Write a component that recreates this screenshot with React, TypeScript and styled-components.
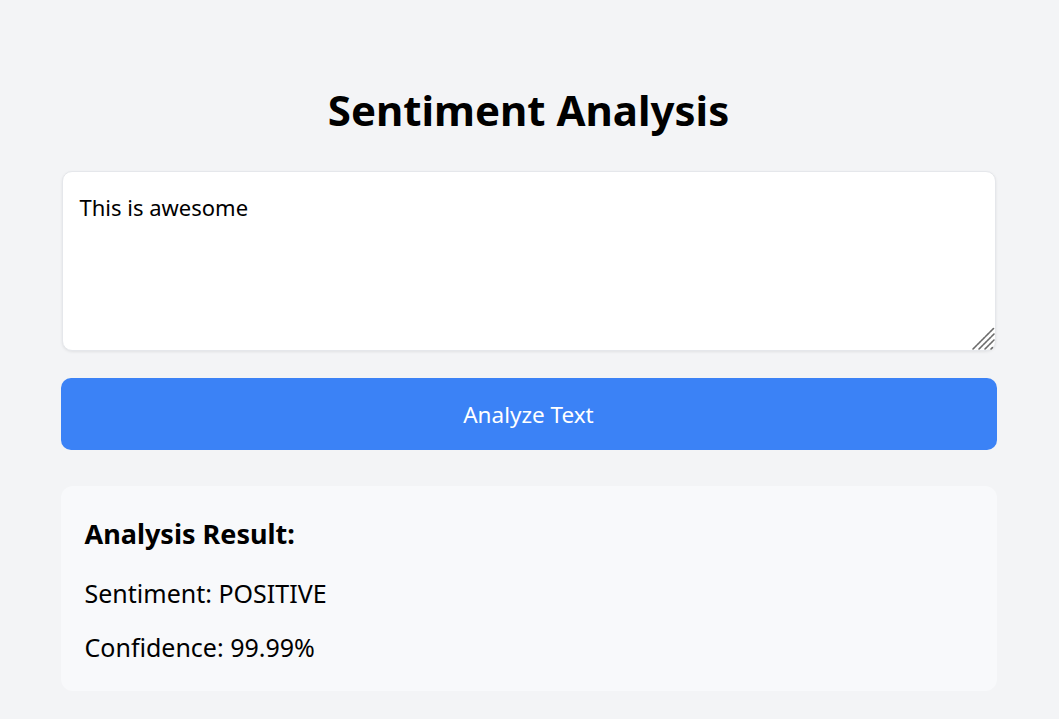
import React, { useState } from "react";
import styled, { createGlobalStyle } from "styled-components";

const Global = createGlobalStyle`
  html, body { margin: 0; padding: 0; background: #f3f4f6; }
  body { font-family: "Noto Sans", "Open Sans", sans-serif; color: #000; }
  * { box-sizing: border-box; }
`;

const Page = styled.div`
  max-width: 1000px;
  margin: 0 auto;
  padding: 2rem 33px 2rem 31px;
  display: flex;
  flex-direction: column;
`;

const Title = styled.h1`
  margin: 53px 0 36px;
  text-align: center;
  font-size: 42px;
  font-weight: 700;
  line-height: 1.2;
`;

const Field = styled.div`
  position: relative;
  margin: 0 1px;
`;

const TextArea = styled.textarea`
  display: block;
  width: 100%;
  height: 180px;
  padding: 21px 17px;
  font-family: inherit;
  font-size: 22px;
  line-height: 1.36;
  border: 1px solid #e5e7eb;
  border-radius: 10px;
  background: #fff;
  box-shadow: 0 1px 3px rgba(0, 0, 0, 0.08);
  resize: none;
  outline: none;
  color: #000;
`;

const Grip = styled.svg`
  position: absolute;
  right: 0;
  bottom: 0;
  width: 26px;
  height: 26px;
  pointer-events: none;
`;

const Button = styled.button`
  margin-top: 27px;
  height: 72px;
  width: 100%;
  border: none;
  border-radius: 10px;
  background: #3b82f6;
  color: #fff;
  font-family: inherit;
  font-size: 22.5px;
  cursor: pointer;
`;

const Result = styled.section`
  margin-top: 36px;
  padding: 24px;
  background: #f8f9fb;
  border-radius: 12px;
`;

const ResultTitle = styled.h3`
  margin: 6px 0 26px;
  font-size: 27px;
  line-height: 1.3;
  font-weight: 700;
`;

const Line = styled.p`
  margin: 0 0 21.5px;
  font-size: 25px;
  line-height: 1.3;
  &:last-child { margin-bottom: 3px; }
`;

export default function App() {
  const [text, setText] = useState("This is awesome");
  return (
    <>
      <Global />
      <Page>
        <Title>Sentiment Analysis</Title>
        <Field>
          <TextArea value={text} onChange={(e) => setText(e.target.value)} />
          <Grip viewBox="0 0 26 26">
            <g stroke="#6b6b6b" strokeWidth="1.6" strokeLinecap="round" strokeDasharray="2 1">
              <line x1="3" y1="24" x2="24" y2="3" />
              <line x1="9" y1="24" x2="24" y2="9" />
              <line x1="15" y1="24" x2="24" y2="15" />
              <line x1="21" y1="24" x2="23" y2="22" />
            </g>
          </Grip>
        </Field>
        <Button>Analyze Text</Button>
        <Result>
          <ResultTitle>Analysis Result:</ResultTitle>
          <Line>Sentiment: POSITIVE</Line>
          <Line>Confidence: 99.99%</Line>
        </Result>
      </Page>
    </>
  );
}
